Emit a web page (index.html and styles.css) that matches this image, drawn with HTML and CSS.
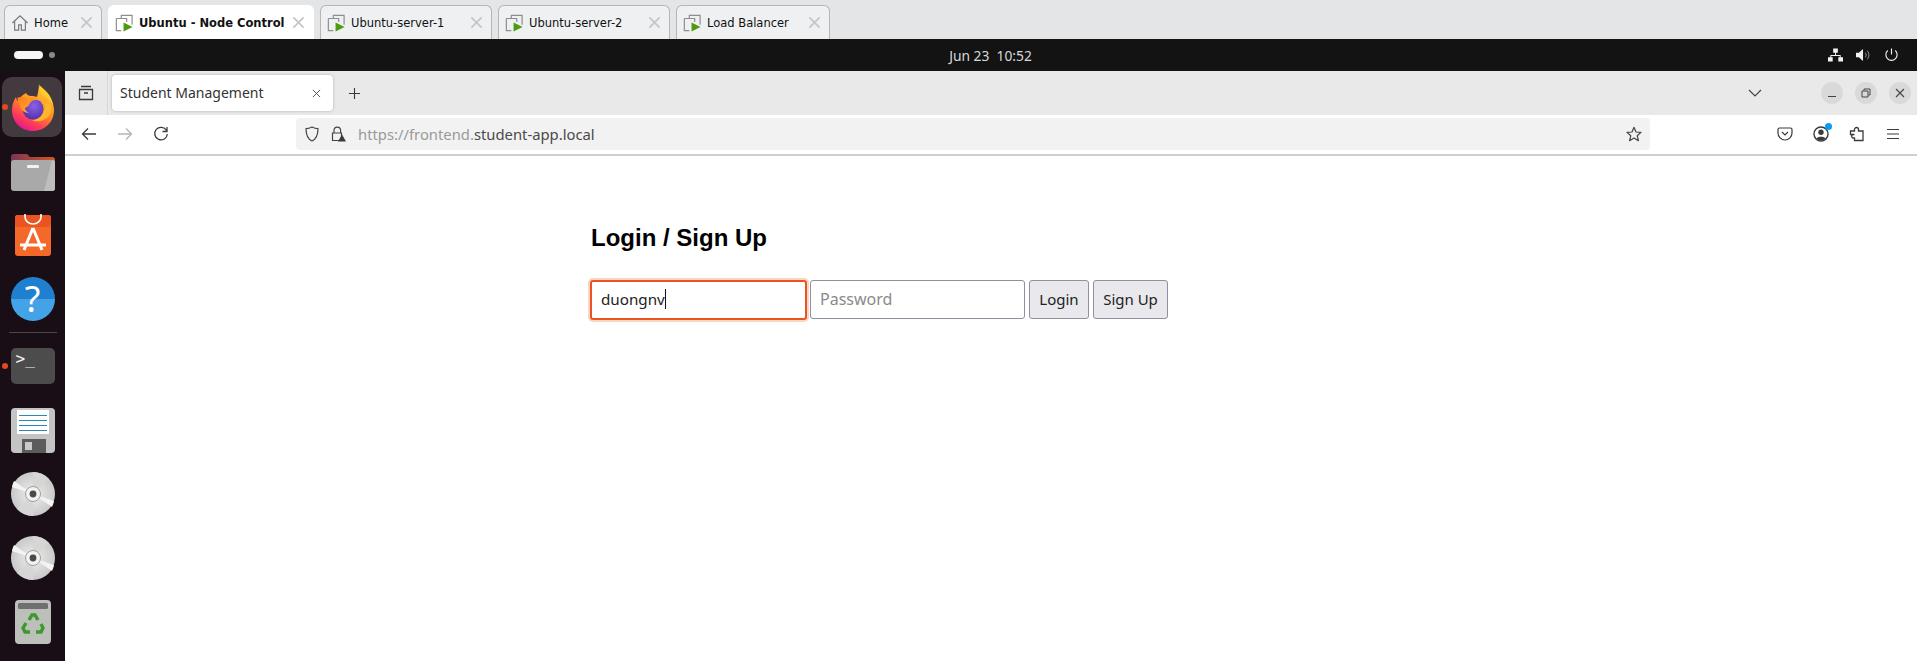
FILE: index.html
```html
<!DOCTYPE html>
<html lang="en">
<head>
  <meta charset="UTF-8" />
  <title>Student Management</title>
  <link rel="stylesheet" href="styles.css">
</head>
<body>
  <svg class="defs" width="0" height="0">
    <defs>
      <symbol id="vm" viewBox="0 0 20 20">
        <path d="M7 5V1.500h12V12M1.500 5H13v4M1.500 5v13.500H7" fill="none" stroke="#8b8d8f" stroke-width="1.300"/>
        <path d="M9.500 9.500 19.500 14.500 9.500 19.500z" fill="#4f9a12"/>
      </symbol>
      <symbol id="cross" viewBox="0 0 14 14">
        <path d="M1.500 1.500l11 11M12.500 1.500l-11 11" fill="none" stroke="#c4c5c7" stroke-width="1.800"/>
      </symbol>
      <radialGradient id="disc" cx="50%" cy="50%" r="50%">
        <stop offset="0" stop-color="#efefef"/>
        <stop offset="1" stop-color="#c9c9c9"/>
      </radialGradient>
      <symbol id="cd" viewBox="0 0 44 44">
        <circle cx="22" cy="22" r="22" fill="url(#disc)"/>
        <path d="M22 22 3 9a22 22 0 0 0-2 6zM22 22l19 13a22 22 0 0 0 2-6z" fill="#f4f4f4"/>
        <path d="M22 22 22 0a22 22 0 0 1 16 7zM22 22 22 44a22 22 0 0 1-16-7z" fill="#d6d6d6"/>
        <circle cx="22" cy="22" r="7.500" fill="#f2f2f2" stroke="#a89f8c"/>
        <circle cx="22" cy="22" r="3.400" fill="#4b4b4b"/>
      </symbol>
    </defs>
  </svg>

  <!-- host tabs -->
  <div class="host-tabs">
    <div class="host-tab tab-home">
      <svg class="host-icon" viewBox="0 0 20 20"><path d="M1.500 10 10 2l8.500 8M4 8v10h4.500v-6h3v6H16V8" fill="none" stroke="#77797b" stroke-width="1.300"/></svg>
      <span class="host-label">Home</span>
      <svg class="host-close"><use href="#cross"/></svg>
    </div>
    <div class="host-tab tab-node is-active">
      <svg class="host-icon"><use href="#vm"/></svg>
      <span class="host-label">Ubuntu - Node Control</span>
      <svg class="host-close"><use href="#cross"/></svg>
    </div>
    <div class="host-tab tab-server">
      <svg class="host-icon"><use href="#vm"/></svg>
      <span class="host-label">Ubuntu-server-1</span>
      <svg class="host-close"><use href="#cross"/></svg>
    </div>
    <div class="host-tab tab-server">
      <svg class="host-icon"><use href="#vm"/></svg>
      <span class="host-label">Ubuntu-server-2</span>
      <svg class="host-close"><use href="#cross"/></svg>
    </div>
    <div class="host-tab tab-balancer">
      <svg class="host-icon"><use href="#vm"/></svg>
      <span class="host-label">Load Balancer</span>
      <svg class="host-close"><use href="#cross"/></svg>
    </div>
  </div>

  <!-- gnome top panel -->
  <div class="panel">
    <div class="workspaces">
      <span class="ws-pill"></span>
      <span class="ws-dot"></span>
    </div>
    <div class="clock">Jun 23&nbsp;&nbsp;10:52</div>
    <div class="tray">
      <svg class="tray-icon" viewBox="0 0 16 14"><path d="M5.500 0h5v4.500h-5zM0 9.500h5V14H0zM11 9.500h5V14h-5zM7.500 4.500h1v2.500H13.500v2.500h-1V8h-9v1.500h-1V7h5z" fill="#f2f2f2"/></svg>
      <svg class="tray-icon" viewBox="0 0 16 14"><path d="M0 4.500h3L7.500.5v13L3 9.500H0z" fill="#f2f2f2"/><path d="M10 4.500a4 4 0 0 1 0 5M12 2.500a7 7 0 0 1 0 9" fill="none" stroke="#9a9a9a" stroke-width="1"/></svg>
      <svg class="tray-icon" viewBox="0 0 16 14"><path d="M8 0v6.500M4 2.200a6 6 0 1 0 8 0" fill="none" stroke="#f2f2f2" stroke-width="1.200"/></svg>
    </div>
  </div>

  <div class="desktop">
    <!-- dock -->
    <aside class="dock">
      <div class="dock-item is-firefox">
        <span class="run-dot"></span>
        <svg width="42" height="48" viewBox="0 0 42 48">
          <defs>
            <linearGradient id="fxBody" x1="0.800" y1="0" x2="0.300" y2="1">
              <stop offset="0" stop-color="#ffd83a"/>
              <stop offset="0.500" stop-color="#ff8f1f"/>
              <stop offset="0.800" stop-color="#ff3a5c"/>
              <stop offset="1" stop-color="#e6178c"/>
            </linearGradient>
            <linearGradient id="fxHead" x1="0" y1="0" x2="1" y2="1">
              <stop offset="0" stop-color="#ff7a1f"/>
              <stop offset="1" stop-color="#ffb52b"/>
            </linearGradient>
            <radialGradient id="fxGlobe" cx="0.550" cy="0.350" r="0.700">
              <stop offset="0" stop-color="#8f5fe8"/>
              <stop offset="1" stop-color="#4a2fa8"/>
            </radialGradient>
          </defs>
          <path d="M27 0c0 5 3 8 7 11 5 4 8 10 8 16 0 12-9 21-21 21S0 39 0 27c0-6 2-10 4-13 0 2 1 3 2 4 1-3 4-6 8-8 1 2 3 3 5 3 2 0 4 0 6 1 1-4 2-9 2-14z" fill="url(#fxBody)"/>
          <path d="M27 2c5 4 13 10 14 20-3-5-7-9-11-10-1-3-2-6-3-10z" fill="#ffcb2e"/>
          <path d="M33 20c1 9-5 17-13 17 5 3 16 1 19-8 1-3 0-6-1-8z" fill="#ffb52b"/>
          <circle cx="21" cy="26" r="10.500" fill="url(#fxGlobe)"/>
          <path d="M5 15c4-2 8-1 11 1 4-2 9-1 12 2-4-2-8-1-10 2-1 2-2 4-5 5 0 2 2 4 4 5-5 0-8-3-9-7 0-3-2-6-3-8z" fill="url(#fxHead)"/>
        </svg>
      </div>
      <div class="dock-item">
        <svg width="44" height="39" viewBox="0 0 44 39">
          <defs>
            <linearGradient id="folderTop" x1="0" y1="0" x2="1" y2="0">
              <stop offset="0" stop-color="#7b3558"/>
              <stop offset="1" stop-color="#d4571f"/>
            </linearGradient>
          </defs>
          <path d="M0 5a3 3 0 0 1 3-3h13l3 3h22a3 3 0 0 1 3 3v10H0z" fill="url(#folderTop)"/>
          <rect y="8" width="44" height="31" rx="3" fill="#a9a9a9"/>
          <path d="M41 8a3 3 0 0 1 3 3v25a3 3 0 0 1-3 3h-8z" fill="#bdbdbd"/>
          <rect x="16" y="13" width="12" height="3" rx="1" fill="#f2f2f2"/>
        </svg>
      </div>
      <div class="dock-item">
        <svg width="36" height="42" viewBox="0 0 36 42">
          <rect y="1" width="36" height="41" rx="3" fill="#f4692a"/>
          <rect y="1" width="36" height="12" rx="3" fill="#e95420"/>
          <path d="M10 0v3a8 7 0 0 0 16 0V0" fill="none" stroke="#fff" stroke-width="1.600"/>
          <path d="M18 14 9 36M18 14l9 22M5 31h26" fill="none" stroke="#fff" stroke-width="3"/>
        </svg>
      </div>
      <div class="dock-item">
        <div class="help-icon">?</div>
      </div>
      <div class="dock-sep"></div>
      <div class="dock-item">
        <span class="run-dot"></span>
        <div class="term-icon">&gt;_</div>
      </div>
      <div class="dock-item">
        <svg width="44" height="45" viewBox="0 0 44 45">
          <rect width="44" height="45" rx="4" fill="#c4c4c4"/>
          <rect x="6" y="2" width="32" height="24" fill="#fff"/>
          <path d="M8 7.500h28M8 12.500h28M8 17.500h28M8 22.500h28" stroke="#2d86b8" stroke-width="1"/>
          <rect x="11" y="31" width="24" height="14" fill="#5c5c5c"/>
          <rect x="14" y="34" width="7" height="8" fill="#c9c9c9"/>
        </svg>
      </div>
      <div class="dock-item"><svg class="cd-icon"><use href="#cd"/></svg></div>
      <div class="dock-item"><svg class="cd-icon"><use href="#cd"/></svg></div>
      <div class="dock-item">
        <svg width="36" height="44" viewBox="0 0 36 44">
          <rect width="36" height="44" rx="4" fill="#bcbfba"/>
          <rect x="3" y="3" width="30" height="6" rx="1.500" fill="#6f6f6f"/>
          <g fill="none" stroke="#3c9a2c" stroke-width="3.400">
            <path d="M14 20l3-5h3l3 5"/>
            <path d="M26 24l2 4-2 4h-5"/>
            <path d="M15 32h-5l-2-4 3-5"/>
          </g>
        </svg>
      </div>
    </aside>

    <!-- firefox window -->
    <div class="browser">
      <div class="fx-tabbar">
        <div class="fx-view">
          <svg class="ui-icon" viewBox="0 0 16 16"><path d="M3 1.500h10M1.500 4.500h13v10h-13zM6 8h4" fill="none" stroke="#3b3b3b" stroke-width="1.300"/></svg>
        </div>
        <div class="fx-tab">
          <span class="fx-tab-title">Student Management</span>
          <svg class="fx-tab-close" viewBox="0 0 10 10"><path d="M1 1l8 8M9 1 1 9" stroke="#444" stroke-width="1"/></svg>
        </div>
        <svg class="fx-new" viewBox="0 0 14 14"><path d="M7 1v12M1 7h12" stroke="#3b3b3b" stroke-width="1.200"/></svg>
        <div class="fx-spacer"></div>
        <svg class="fx-list" viewBox="0 0 14 8"><path d="M1 1l6 6 6-6" fill="none" stroke="#444" stroke-width="1.200"/></svg>
        <div class="win-btns">
          <span class="win-btn"><svg viewBox="0 0 10 10"><path d="M1 8.500h8" stroke="#444" stroke-width="1"/></svg></span>
          <span class="win-btn"><svg viewBox="0 0 10 10"><path d="M3 2.500V1h6v6H7.500M1 3h6v6H1z" fill="none" stroke="#444" stroke-width="1"/></svg></span>
          <span class="win-btn"><svg viewBox="0 0 10 10"><path d="M1 1l8 8M9 1 1 9" stroke="#444" stroke-width="1.100"/></svg></span>
        </div>
      </div>

      <div class="fx-toolbar">
        <div class="nav-btns">
          <svg class="ui-icon" viewBox="0 0 16 16"><path d="M15 8H1.500M7 2.500 1.500 8 7 13.500" fill="none" stroke="#3b3b3b" stroke-width="1.300"/></svg>
          <svg class="ui-icon" viewBox="0 0 16 16"><path d="M1 8h13.500M9 2.500 14.500 8 9 13.500" fill="none" stroke="#b5b5b5" stroke-width="1.300"/></svg>
          <svg class="ui-icon" viewBox="0 0 16 16"><path d="M13.500 4.500A6.300 6.300 0 1 0 14.300 8M14 1v4.500H9.500" fill="none" stroke="#3b3b3b" stroke-width="1.300"/></svg>
        </div>
        <div class="urlbar">
          <svg class="ui-icon" viewBox="0 0 16 16"><path d="M8 1c2 1 4 1.600 6 1.700 0 6-1.800 10.300-6 12.300C3.800 13 2 8.700 2 2.700 4 2.600 6 2 8 1z" fill="none" stroke="#444" stroke-width="1.200"/></svg>
          <svg class="ui-icon" viewBox="0 0 16 16"><path d="M4 7V4.500a3.300 3.300 0 0 1 6.600 0V7M2.500 7h9v7.500h-9z" fill="none" stroke="#444" stroke-width="1.200"/><path d="M12 8.500 16 15.500H8z" fill="#3b3b3b"/></svg>
          <span class="url"><span class="url-dim">https://frontend.</span>student-app.local</span>
          <svg class="ui-icon url-star" viewBox="0 0 16 16"><path d="M8 1.300 10 6l5 .4-3.800 3.300 1.200 5L8 12l-4.400 2.700 1.200-5L1 6.400 6 6z" fill="none" stroke="#444" stroke-width="1.200" stroke-linejoin="round"/></svg>
        </div>
        <div class="tools">
          <svg class="ui-icon" viewBox="0 0 16 16"><path d="M2.500 2h11A1.500 1.500 0 0 1 15 3.500V7A7 7 0 0 1 1 7V3.500A1.500 1.500 0 0 1 2.500 2z" fill="none" stroke="#3b3b3b" stroke-width="1.200"/><path d="M5 6l3 3 3-3" fill="none" stroke="#3b3b3b" stroke-width="1.200"/></svg>
          <span class="account">
            <svg class="ui-icon" viewBox="0 0 16 16"><circle cx="8" cy="8" r="7" fill="none" stroke="#3b3b3b" stroke-width="1.400"/><circle cx="8" cy="6.300" r="2.700" fill="#3b3b3b"/><path d="M3.300 12.500C4.500 10 11.500 10 12.700 12.500 10 15 6 15 3.300 12.500z" fill="#3b3b3b"/></svg>
            <span class="account-dot"></span>
          </span>
          <svg class="ui-icon" viewBox="0 0 16 16"><path d="M1.500 5h4V3.500a2 2 0 0 1 4 0V5H14v9.500H5.500V12H4a1.800 1.800 0 0 1 0-3.500h1.500V8.500H1.500z" fill="none" stroke="#3b3b3b" stroke-width="1.300"/></svg>
          <svg class="ui-icon" viewBox="0 0 16 16"><path d="M2 3.500h12M2 8h12M2 12.500h12" stroke="#3b3b3b" stroke-width="1.200"/></svg>
        </div>
      </div>

      <main class="page">
        <h2 class="page-title">Login / Sign Up</h2>
        <form class="login-form">
          <div class="field-focus"><input class="field is-focused" type="text" value="duongnv"><span class="caret"></span></div>
          <input class="field" type="password" placeholder="Password">
          <button class="btn btn-login" type="button">Login</button>
          <button class="btn btn-signup" type="button">Sign Up</button>
        </form>
      </main>
    </div>
  </div>
</body>
</html>
```

FILE: styles.css
```css
* {
  box-sizing: border-box;
}

html, body {
  margin: 0;
  height: 661px;
  overflow: hidden;
}

body {
  background-color: #fff;
  font-family: 'Noto Sans', sans-serif;
  display: flex;
  flex-direction: column;
}

.defs {
  position: absolute;
}

/* host tabs */
.host-tabs {
  height: 39px;
  flex: none;
  background-color: #e4e5e7;
  display: flex;
  align-items: flex-end;
  gap: 6px;
  padding-left: 4px;
}

.host-tab {
  height: 34px;
  background-color: #eef0f2;
  border: 1px solid #b4b6b8;
  border-bottom: none;
  border-radius: 6px 6px 0 0;
  display: flex;
  align-items: center;
  padding-left: 6px;
  position: relative;
}

.tab-home { width: 98px; }
.tab-node { width: 206px; }
.tab-server { width: 172px; }
.tab-balancer { width: 154px; }

.host-tab.is-active {
  background-color: #fff;
  border-color: #fff;
}

.host-icon {
  width: 18px;
  height: 18px;
  flex: none;
}

.host-label {
  margin-left: 6px;
  font-family: 'DejaVu Sans', sans-serif;
  font-size: 11.500px;
  color: #111;
  white-space: nowrap;
}

.tab-home .host-label {
  margin-left: 5px;
}

.is-active .host-label {
  font-weight: bold;
}

.host-close {
  width: 13px;
  height: 13px;
  position: absolute;
  right: 8px;
  top: 10px;
}

/* top panel */
.panel {
  height: 32px;
  flex: none;
  background-color: #131313;
  display: flex;
  align-items: center;
  justify-content: space-between;
  padding: 0 18px 0 14px;
}

.workspaces {
  display: flex;
  align-items: center;
  gap: 6px;
}

.ws-pill {
  width: 29px;
  height: 8px;
  border-radius: 4px;
  background-color: #f5f5f5;
}

.ws-dot {
  width: 6px;
  height: 6px;
  border-radius: 50%;
  background-color: #8a8a8a;
}

.clock {
  color: #d8d8d8;
  font-size: 13.800px;
  padding-left: 98px;
}

.tray {
  display: flex;
  align-items: center;
  gap: 13px;
}

.tray-icon {
  width: 15px;
  height: 14px;
}

/* dock */
.desktop {
  flex: 1;
  display: flex;
  min-height: 0;
}

.dock {
  width: 65px;
  flex: none;
  background-color: #1a0e16;
  padding-top: 4px;
  display: flex;
  flex-direction: column;
  align-items: center;
}

.dock-item {
  width: 65px;
  height: 64px;
  flex: none;
  display: flex;
  align-items: center;
  justify-content: center;
  position: relative;
}

.is-firefox::before {
  content: "";
  position: absolute;
  left: 2px;
  top: 2px;
  width: 60px;
  height: 60px;
  border-radius: 10px;
  background-color: #433a40;
}

.is-firefox svg {
  position: relative;
}

.run-dot {
  position: absolute;
  left: 2px;
  top: 29px;
  width: 6px;
  height: 6px;
  border-radius: 50%;
  background-color: #e2491c;
  z-index: 1;
}

.help-icon {
  width: 44px;
  height: 44px;
  border-radius: 50%;
  background: linear-gradient(#1f80d0 50%, #44a3e6 50%);
  color: #fff;
  font-family: 'Noto Sans', sans-serif;
  font-size: 36px;
  line-height: 44px;
  text-align: center;
}

.dock-sep {
  width: 48px;
  height: 1px;
  margin: 1px 0;
  flex: none;
  background-color: #4d444a;
}

.term-icon {
  width: 44px;
  height: 36px;
  border-radius: 5px;
  background-color: #4c4c4c;
  color: #f0f0f0;
  font-family: 'DejaVu Sans Mono', monospace;
  font-size: 16px;
  line-height: 20px;
  padding: 1px 0 0 5px;
}

.cd-icon {
  width: 44px;
  height: 44px;
}

/* browser */
.browser {
  flex: 1;
  min-width: 0;
  display: flex;
  flex-direction: column;
}

.fx-tabbar {
  height: 44px;
  flex: none;
  background-color: #e9e9e9;
  display: flex;
  align-items: center;
}

.fx-view {
  width: 43px;
  height: 44px;
  flex: none;
  border-right: 1px solid #d7d7d7;
  display: flex;
  align-items: center;
  justify-content: center;
}

.ui-icon {
  width: 16px;
  height: 16px;
  flex: none;
}

.fx-tab {
  width: 221px;
  height: 36px;
  margin-left: 4px;
  background-color: #fff;
  border-radius: 4px;
  box-shadow: 0 0 3px rgba(0, 0, 0, 0.25);
  display: flex;
  align-items: center;
  justify-content: space-between;
  padding: 0 12px 0 8px;
}

.fx-tab-title {
  font-size: 14px;
  color: #333;
  padding-bottom: 2px;
}

.fx-tab-close {
  width: 9px;
  height: 9px;
}

.fx-new {
  width: 13px;
  height: 13px;
  margin-left: 15px;
}

.fx-spacer {
  flex: 1;
}

.fx-list {
  width: 14px;
  height: 8px;
  margin-right: 59px;
}

.win-btns {
  display: flex;
  gap: 12px;
  padding-right: 6px;
}

.win-btn {
  width: 22px;
  height: 22px;
  border-radius: 50%;
  background-color: #d9d9d9;
  display: flex;
  align-items: center;
  justify-content: center;
}

.win-btn svg {
  width: 10px;
  height: 10px;
}

.fx-toolbar {
  height: 41px;
  flex: none;
  background-color: #fff;
  border-bottom: 2px solid #cfcfcf;
  display: flex;
  align-items: center;
  padding-bottom: 1px;
}

.nav-btns {
  display: flex;
  gap: 20px;
  padding-left: 16px;
  width: 231px;
  flex: none;
}

.urlbar {
  width: 1354px;
  height: 32px;
  flex: none;
  background-color: #f2f2f2;
  border-radius: 4px;
  display: flex;
  align-items: center;
  gap: 10px;
  padding: 0 8px;
}

.url {
  font-size: 14.800px;
  color: #4a4a4a;
  flex: 1;
  margin-left: 2px;
}

.url-dim {
  color: #9a9a9a;
}

.tools {
  display: flex;
  gap: 20px;
  margin-left: 127px;
}

.account {
  position: relative;
  display: flex;
}

.account-dot {
  position: absolute;
  right: -3px;
  top: -3px;
  width: 7px;
  height: 7px;
  border-radius: 50%;
  background-color: #0a9cf5;
}

/* page */
.page {
  flex: 1;
  background-color: #fff;
  padding: 68px 0 0 525px;
}

.page-title {
  margin: 0 0 28px 1px;
  font-family: 'Liberation Sans', sans-serif;
  font-size: 24px;
  font-weight: bold;
  line-height: 28px;
  color: #000;
}

.login-form {
  display: flex;
  align-items: flex-start;
  gap: 4px;
}

.field-focus {
  position: relative;
  display: flex;
  margin-right: -1px;
}

.field {
  width: 215px;
  height: 39px;
  border: 1px solid #8f8f9d;
  border-radius: 3px;
  background-color: #fff;
  padding: 0 9px 2px;
  font-family: 'Noto Sans', sans-serif;
  font-size: 16px;
  color: #222;
  outline: none;
}

.field::placeholder {
  color: #8a8a8a;
}

.field.is-focused {
  width: 217px;
  height: 40px;
  border: 2px solid #e95420;
  box-shadow: 0 0 0 2px #fbd5c6;
  font-size: 15.200px;
}

.caret {
  position: absolute;
  left: 75px;
  top: 9px;
  width: 1px;
  height: 20px;
  background-color: #111;
}

.btn {
  height: 39px;
  border: 1px solid #8f8f9d;
  border-radius: 3px;
  background-color: #e9e9ed;
  font-family: 'Noto Sans', sans-serif;
  font-size: 15px;
  color: #222;
  padding: 0 0 2px;
}

.btn-login { width: 60px; }
.btn-signup { width: 75px; }
```
